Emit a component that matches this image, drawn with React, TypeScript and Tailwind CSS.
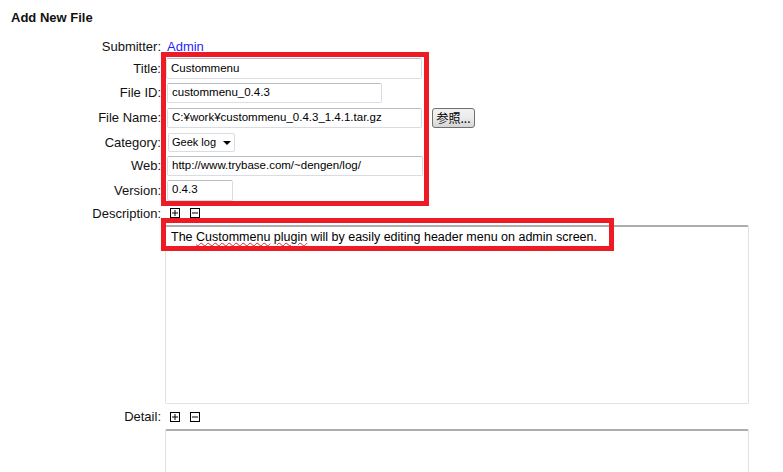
import React from "react";

const labelCls =
  "w-[161px] shrink-0 text-right text-[13px] leading-none text-[#111]";
const inputCls =
  "h-full bg-white border border-[#d9dde3] border-t-[#b9bcc2] rounded-[2px] flex items-center pl-[4px] text-[11.5px] text-black whitespace-nowrap overflow-hidden";
const wavy =
  "underline decoration-wavy decoration-[#e02020] decoration-1 underline-offset-[1px]";

function BoxIcon({ minus }: { minus?: boolean }) {
  return (
    <svg width="10" height="10" viewBox="0 0 10 10" className="block">
      <rect x="0.5" y="0.5" width="9" height="9" fill="white" stroke="black" />
      <line x1="2" y1="5" x2="8" y2="5" stroke="black" />
      {!minus && <line x1="5" y1="2" x2="5" y2="8" stroke="black" />}
    </svg>
  );
}

export default function App() {
  return (
    <div
      className="relative w-[783px] h-[472px] bg-white overflow-hidden"
      style={{ fontFamily: '"Liberation Sans", Arial, sans-serif' }}
    >
      <div className="h-[36px] flex items-center pl-[11px] text-[13px] font-bold text-[#111]">
        Add New File
      </div>

      <div className="flex items-center h-[20px]">
        <div className={labelCls}>Submitter:</div>
        <span className="ml-[6px] text-[13px] leading-none text-[#1f1fff]">
          Admin
        </span>
      </div>

      <div className="flex items-center h-[25px]">
        <div className={labelCls}>Title:</div>
        <div className="ml-[5px] w-[256px] h-[21px]">
          <div className={inputCls}>Custommenu</div>
        </div>
      </div>

      <div className="flex items-center h-[23px]">
        <div className={labelCls}>File ID:</div>
        <div className="ml-[6px] w-[215px] h-[20px]">
          <div className={inputCls}>custommenu_0.4.3</div>
        </div>
      </div>

      <div className="flex items-center h-[27px]">
        <div className={labelCls}>File Name:</div>
        <div className="ml-[6px] w-[255px] h-[20px]">
          <div className={inputCls}>
            {"C:¥work¥custommenu_0.4.3_1.4.1.tar.gz"}
          </div>
        </div>
        <div
          className="ml-[10px] w-[43px] h-[20px] border border-[#707070] rounded-[3px] bg-gradient-to-b from-[#f2f2f2] via-[#ebebeb] to-[#d5d5d5] flex items-center justify-center text-[12px] text-black leading-none"
          style={{
            fontFamily: '"Noto Sans CJK JP", "Liberation Sans", sans-serif',
          }}
        >
          参照...
        </div>
      </div>

      <div className="flex items-center h-[23px]">
        <div className={labelCls}>Category:</div>
        <div className="ml-[7px] w-[67px] h-[19px] bg-white border border-[#d9dde3] rounded-[2px] flex items-center justify-between pl-[3px] pr-[3px] text-[11px] text-black">
          <span>Geek log</span>
          <svg width="8" height="4" viewBox="0 0 8 4">
            <polygon points="0,0 8,0 4,4" fill="black" />
          </svg>
        </div>
      </div>

      <div className="flex items-center h-[23px]">
        <div className={labelCls}>Web:</div>
        <div className="ml-[6px] w-[256px] h-[20px]">
          <div className={inputCls}>http://www.trybase.com/~dengen/log/</div>
        </div>
      </div>

      <div className="flex items-center h-[26px]">
        <div className={labelCls}>Version:</div>
        <div className="ml-[6px] w-[66px] h-[21px]">
          <div className={inputCls}>0.4.3</div>
        </div>
      </div>

      <div className="flex items-center h-[20px]">
        <div className={labelCls}>Description:</div>
        <div className="ml-[9px] flex items-center gap-[10px]">
          <BoxIcon />
          <BoxIcon minus />
        </div>
      </div>

      <div className="pl-[165px] pt-[2px]">
        <div className="w-[584px] h-[179px] bg-white border border-[#dfe3e8] border-t-[#adadad] border-t-2 rounded-[2px] pl-[5px] pt-[2px] text-[12.5px] text-black leading-[17px]">
          The <span className={wavy}>Custommenu</span>{" "}
          <span className={wavy}>plugin</span> will by easily editing header
          menu on admin screen.
        </div>
      </div>

      <div className="flex items-center h-[25px]">
        <div className={labelCls}>Detail:</div>
        <div className="ml-[9px] flex items-center gap-[10px]">
          <BoxIcon />
          <BoxIcon minus />
        </div>
      </div>

      <div className="pl-[165px]">
        <div className="w-[584px] h-[80px] bg-white border border-[#dfe3e8] border-t-[#adadad] border-t-2 rounded-[2px]" />
      </div>

      <div className="absolute left-[161px] top-[52px] w-[268px] h-[154px] border-[5px] border-[#ed1c24] pointer-events-none" />
      <div className="absolute left-[161px] top-[218px] w-[453px] h-[33px] border-[5px] border-[#ed1c24] pointer-events-none" />
    </div>
  );
}
